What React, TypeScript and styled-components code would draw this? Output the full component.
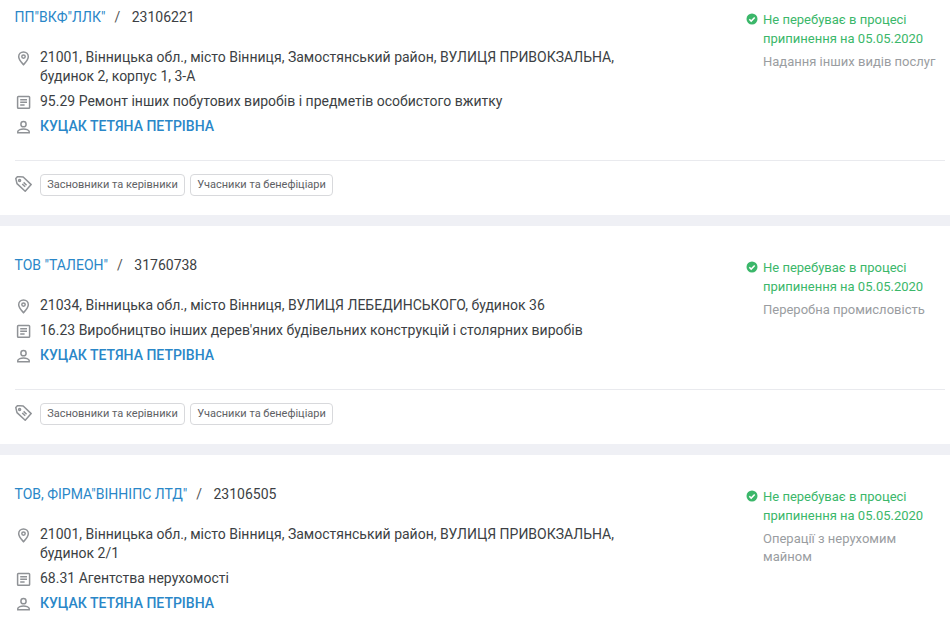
import styled, { createGlobalStyle } from 'styled-components';

const GlobalStyle = createGlobalStyle`
  html, body {
    margin: 0;
    padding: 0;
    height: 100%;
    overflow: hidden;
    background: #fff;
    font-family: Roboto, "Liberation Sans", sans-serif;
  }
`;

interface Company {
  name: string;
  code: string;
  address: string;
  activity: string;
  director: string;
  sector: string;
  hasLinks: boolean;
}

const COMPANIES: Company[] = [
  {
    name: 'ПП"ВКФ"ЛЛК"',
    code: '23106221',
    address: '21001, Вінницька обл., місто Вінниця, Замостянський район, ВУЛИЦЯ ПРИВОКЗАЛЬНА, будинок 2, корпус 1, 3-А',
    activity: '95.29 Ремонт інших побутових виробів і предметів особистого вжитку',
    director: 'КУЦАК ТЕТЯНА ПЕТРІВНА',
    sector: 'Надання інших видів послуг',
    hasLinks: true,
  },
  {
    name: 'ТОВ "ТАЛЕОН"',
    code: '31760738',
    address: '21034, Вінницька обл., місто Вінниця, ВУЛИЦЯ ЛЕБЕДИНСЬКОГО, будинок 36',
    activity: '16.23 Виробництво інших дерев\'яних будівельних конструкцій і столярних виробів',
    director: 'КУЦАК ТЕТЯНА ПЕТРІВНА',
    sector: 'Переробна промисловість',
    hasLinks: true,
  },
  {
    name: 'ТОВ, ФІРМА"ВІННІПС ЛТД"',
    code: '23106505',
    address: '21001, Вінницька обл., місто Вінниця, Замостянський район, ВУЛИЦЯ ПРИВОКЗАЛЬНА, будинок 2/1',
    activity: '68.31 Агентства нерухомості',
    director: 'КУЦАК ТЕТЯНА ПЕТРІВНА',
    sector: 'Операції з нерухомим майном',
    hasLinks: false,
  },
];

function PinIcon() {
  return (
    <svg width="16" height="16" viewBox="0 0 16 16" fill="none" stroke="#8f9296" strokeWidth="1.5">
      <path d="M7.5 2c-2.7 0-4.8 2-4.8 4.7 0 3 3.2 6.2 4.8 8 1.6-1.8 4.8-5 4.8-8C12.3 4 10.2 2 7.5 2z" />
      <circle cx="7.5" cy="6.6" r="1.7" />
    </svg>
  );
}

function DocIcon() {
  return (
    <svg width="16" height="16" viewBox="0 0 16 16" fill="none" stroke="#8f9296" strokeWidth="1.5">
      <rect x="1.6" y="2.4" width="12" height="11.8" rx="0.8" />
      <path d="M4.2 5.7h6.8M4.2 8.3h6.8M4.2 10.9h4.4" />
    </svg>
  );
}

function UserIcon() {
  return (
    <svg width="16" height="16" viewBox="0 0 16 16" fill="none" stroke="#8f9296" strokeWidth="1.5">
      <circle cx="7.5" cy="5.2" r="2.6" />
      <path d="M1.8 13.8v-1.2c0-1.8 3.5-2.7 5.7-2.7s5.7.9 5.7 2.7v1.2z" />
    </svg>
  );
}

function TagIcon() {
  return (
    <svg width="18" height="18" viewBox="0 0 18 18" fill="none" stroke="#8f9296" strokeWidth="1.5" strokeLinejoin="round">
      <path d="M.8 2.6l1.8-2 5.6.4 8 7.6-6 6.6-8.2-7.6z" />
      <circle cx="4.6" cy="4.4" r="1" />
      <path d="M7.2 8l3 2.8M8.6 6.4l3 2.8" />
    </svg>
  );
}

function CheckIcon() {
  return (
    <svg width="12" height="12" viewBox="0 0 12 12">
      <circle cx="6" cy="6" r="5.5" fill="#3bb76a" />
      <path d="M3.3 6.2l1.9 1.9 3.5-3.7" fill="none" stroke="#fff" strokeWidth="1.5" />
    </svg>
  );
}

function CompanyCard({ company }: { company: Company }) {
  return (
    <Card>
      <Body>
        <Main>
          <Heading>
            <Name>{company.name}</Name>
            <Slash>/</Slash>
            <Code>{company.code}</Code>
          </Heading>
          <InfoRow>
            <IconSlot><PinIcon /></IconSlot>
            <span>{company.address}</span>
          </InfoRow>
          <InfoRow>
            <IconSlot><DocIcon /></IconSlot>
            <span>{company.activity}</span>
          </InfoRow>
          <InfoRow>
            <IconSlot><UserIcon /></IconSlot>
            <Director>{company.director}</Director>
          </InfoRow>
        </Main>
        <Side>
          <Status>
            <StatusIcon><CheckIcon /></StatusIcon>
            <span>Не перебуває в процесі припинення на 05.05.2020</span>
          </Status>
          <Sector>{company.sector}</Sector>
        </Side>
      </Body>
      {company.hasLinks && (
        <Footer>
          <TagSlot><TagIcon /></TagSlot>
          <Chip>Засновники та керівники</Chip>
          <Chip>Учасники та бенефіціари</Chip>
        </Footer>
      )}
    </Card>
  );
}

export default function App() {
  return (
    <>
      <GlobalStyle />
      <List>
        {COMPANIES.map((c) => (
          <CompanyCard key={c.code} company={c} />
        ))}
      </List>
    </>
  );
}

/* ---- styled ---- */

const List = styled.div`
  margin-top: -22px;
  width: 950px;
  background: #eff0f5;
  display: flex;
  flex-direction: column;
  gap: 11px;
`;

const Card = styled.div`
  background: #fff;
  padding: 29px 5px 0 15px;
`;

const Body = styled.div`
  display: flex;
  justify-content: space-between;
`;

const Main = styled.div`
  width: 620px;
  font-size: 14px;
  line-height: 19px;
  color: #3c3f44;
`;

const Heading = styled.div`
  display: flex;
  align-items: center;
  height: 20px;
  margin-bottom: 21px;
  margin-left: -0.5px;
`;

const Name = styled.a`
  color: #2a87c8;
`;

const Slash = styled.span`
  margin: 0 11.5px 0 9px;
  color: #555;
`;

const Code = styled.span`
  color: #3c3f44;
`;

const InfoRow = styled.div`
  display: flex;
  margin-bottom: 6px;
`;

const IconSlot = styled.div`
  flex: 0 0 25px;
  height: 19px;
  display: flex;
  align-items: center;
  svg {
    margin-left: 1px;
  }
`;

const Director = styled.a`
  color: #2a87c8;
  font-weight: 500;
`;

const Side = styled.div`
  width: 199px;
  margin-top: 3px;
  margin-left: -1px;
  font-size: 13px;
  line-height: 19px;
`;

const Status = styled.div`
  position: relative;
  padding-left: 17px;
  color: #3bb76a;
`;

const StatusIcon = styled.span`
  position: absolute;
  left: 0;
  top: 3px;
  display: flex;
`;

const Sector = styled.div`
  margin-top: 5px;
  padding-left: 17px;
  line-height: 18px;
  color: #9a9da1;
`;

const Footer = styled.div`
  margin-top: 18px;
  border-top: 1px solid #e9eaee;
  display: flex;
  align-items: center;
  gap: 5px;
  padding: 13px 0 19px;
`;

const TagSlot = styled.div`
  flex: 0 0 20px;
  display: flex;
`;

const Chip = styled.div`
  height: 20px;
  padding: 0 6.2px;
  border: 1px solid #d8d9dc;
  border-radius: 4px;
  font-size: 11px;
  line-height: 20px;
  color: #5e6165;
`;
